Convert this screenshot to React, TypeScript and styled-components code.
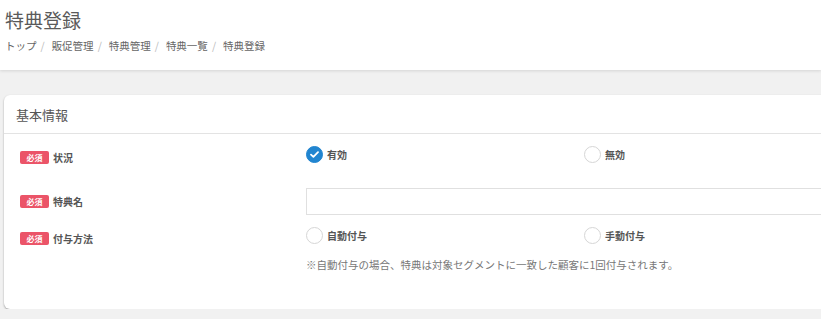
import styled, { createGlobalStyle } from "styled-components";

const GlobalStyle = createGlobalStyle`
  html, body {
    margin: 0;
    padding: 0;
    background: #f1f1f1;
    overflow: hidden;
  }
  body {
    font-family: "Noto Sans CJK JP", "Noto Sans", sans-serif;
    color: #555;
  }
`;

const PageHeader = styled.header`
  background: #ffffff;
  height: 70px;
  padding: 6px 5px 0;
  box-sizing: border-box;
  box-shadow: 0 1px 3px rgba(0, 0, 0, 0.12);
`;

const Title = styled.h1`
  margin: 0;
  font-size: 19px;
  font-weight: 400;
  line-height: 28px;
  color: #5a5a5a;
`;

const Breadcrumbs = styled.nav`
  display: flex;
  margin-top: 5px;
  font-size: 10.5px;
  line-height: 14px;
  color: #666;
`;

const Crumb = styled.span`
  &:not(:last-child)::after {
    content: "/";
    color: #bbb;
    margin: 0 7px 0 4px;
  }
`;

const Content = styled.main`
  padding: 25px 0 0 4px;
`;

const Card = styled.section`
  width: 860px;
  background: #ffffff;
  border-radius: 6px;
  box-shadow: 0 1px 2px rgba(0, 0, 0, 0.35);
`;

const CardHeader = styled.div`
  height: 38px;
  padding: 0 12px;
  display: flex;
  align-items: center;
  border-bottom: 1px solid #e3e3e3;
  font-size: 13px;
  color: #555;
`;

const CardBody = styled.div`
  padding: 12px 0 37px 16px;
`;

const FormRow = styled.div<{ $gap?: number }>`
  display: grid;
  grid-template-columns: 286px 1fr;
  align-items: start;
  margin-top: ${(p) => p.$gap ?? 0}px;
`;

const LabelCell = styled.div<{ $offset?: number }>`
  display: flex;
  align-items: center;
  gap: 4px;
  padding-top: ${(p) => p.$offset ?? 0}px;
  font-size: 10px;
  font-weight: 700;
  color: #555;
`;

const Required = styled.span`
  display: inline-flex;
  align-items: center;
  justify-content: center;
  width: 29px;
  height: 13px;
  border-radius: 2px;
  background: #eb5468;
  color: #fff;
  font-size: 8px;
  font-weight: 700;
`;

const Options = styled.div`
  display: grid;
  grid-template-columns: 278px 278px;
`;

const Option = styled.label`
  display: flex;
  align-items: center;
  gap: 4px;
  font-size: 10px;
  font-weight: 700;
  color: #555;
`;

const RadioCircle = styled.span<{ $checked?: boolean }>`
  width: 17px;
  height: 17px;
  border-radius: 50%;
  box-sizing: border-box;
  border: 1px solid ${(p) => (p.$checked ? "#2185d0" : "#d6d6d6")};
  background: ${(p) => (p.$checked ? "#2185d0" : "#fff")};
  display: inline-flex;
  align-items: center;
  justify-content: center;
`;

const TextInput = styled.input`
  display: block;
  width: 100%;
  height: 27px;
  box-sizing: border-box;
  border: 1px solid #e0e0e0;
  border-radius: 0;
  outline: none;
`;

const Note = styled.p`
  margin: 13px 0 0;
  font-size: 10.5px;
  color: #777;
`;

function Radio({ label, checked }: { label: string; checked?: boolean }) {
  return (
    <Option>
      <RadioCircle $checked={checked}>
        {checked && (
          <svg width="9" height="7" viewBox="0 0 9 7">
            <path
              d="M1 3.6 L3.4 5.8 L8 1.2"
              fill="none"
              stroke="#fff"
              strokeWidth="1.8"
              strokeLinecap="round"
              strokeLinejoin="round"
            />
          </svg>
        )}
      </RadioCircle>
      {label}
    </Option>
  );
}

export default function App() {
  return (
    <>
      <GlobalStyle />
      <PageHeader>
        <Title>特典登録</Title>
        <Breadcrumbs>
          <Crumb>トップ</Crumb>
          <Crumb>販促管理</Crumb>
          <Crumb>特典管理</Crumb>
          <Crumb>特典一覧</Crumb>
          <Crumb>特典登録</Crumb>
        </Breadcrumbs>
      </PageHeader>
      <Content>
        <Card>
          <CardHeader>基本情報</CardHeader>
          <CardBody>
            <FormRow>
              <LabelCell $offset={4}>
                <Required>必須</Required>状況
              </LabelCell>
              <Options>
                <Radio label="有効" checked />
                <Radio label="無効" />
              </Options>
            </FormRow>
            <FormRow $gap={23}>
              <LabelCell $offset={6}>
                <Required>必須</Required>特典名
              </LabelCell>
              <TextInput type="text" />
            </FormRow>
            <FormRow $gap={12}>
              <LabelCell $offset={4}>
                <Required>必須</Required>付与方法
              </LabelCell>
              <div>
                <Options>
                  <Radio label="自動付与" />
                  <Radio label="手動付与" />
                </Options>
                <Note>
                  ※自動付与の場合、特典は対象セグメントに一致した顧客に1回付与されます。
                </Note>
              </div>
            </FormRow>
          </CardBody>
        </Card>
      </Content>
    </>
  );
}
